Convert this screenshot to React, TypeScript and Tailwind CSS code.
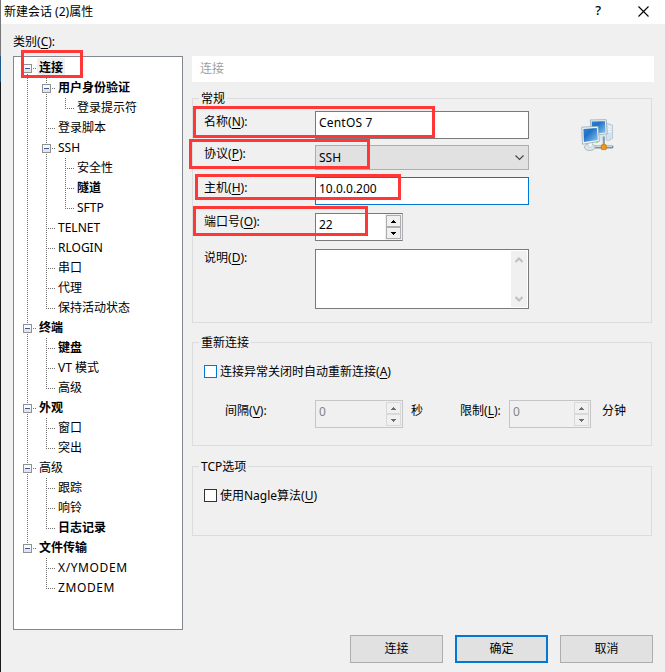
import React from 'react';

interface TreeNode {
  label: string;
  bold?: boolean;
  selected?: boolean;
  wide?: boolean;
  children?: TreeNode[];
}

const categories: TreeNode[] = [
  {
    label: '连接',
    bold: true,
    selected: true,
    children: [
      { label: '用户身份验证', bold: true, children: [{ label: '登录提示符' }] },
      { label: '登录脚本' },
      {
        label: 'SSH',
        children: [{ label: '安全性' }, { label: '隧道', bold: true }, { label: 'SFTP' }],
      },
      { label: 'TELNET' },
      { label: 'RLOGIN' },
      { label: '串口' },
      { label: '代理' },
      { label: '保持活动状态' },
    ],
  },
  {
    label: '终端',
    bold: true,
    children: [{ label: '键盘', bold: true }, { label: 'VT 模式' }, { label: '高级' }],
  },
  { label: '外观', bold: true, children: [{ label: '窗口' }, { label: '突出' }] },
  {
    label: '高级',
    children: [{ label: '跟踪' }, { label: '响铃' }, { label: '日志记录', bold: true }],
  },
  {
    label: '文件传输',
    bold: true,
    children: [{ label: 'X/YMODEM', wide: true }, { label: 'ZMODEM', wide: true }],
  },
];

interface GuideProps {
  up?: boolean;
  down?: boolean;
  branch?: boolean;
  expander?: boolean;
}

// One 19x20 cell of the tree: dotted connector lines and the [-] box
const Guide: React.FC<GuideProps> = ({ up, down, branch, expander }) => (
  <svg width="19" height="20" className="shrink-0" shapeRendering="crispEdges">
    <g stroke="#6f6f6f" strokeDasharray="1 1">
      {up && <line x1="9.5" y1="0" x2="9.5" y2="11" />}
      {down && <line x1="9.5" y1="10" x2="9.5" y2="20" />}
      {branch && <line x1="9" y1="10.5" x2="18" y2="10.5" />}
    </g>
    {expander && (
      <>
        <rect x="5" y="6" width="9" height="9" fill="#919191" />
        <rect x="6" y="7" width="7" height="7" fill="#fafafa" />
        <rect x="6" y="11" width="7" height="3" fill="#e6e6e6" />
        <rect x="7" y="10" width="5" height="1" fill="#3b5aa5" />
      </>
    )}
  </svg>
);

const TreeItem: React.FC<{ node: TreeNode; depth: number; first: boolean; last: boolean; trail: boolean[] }> = ({
  node,
  depth,
  first,
  last,
  trail,
}) => (
  <li>
    <div className="flex h-5 items-center">
      {trail.map((more, i) => (
        <Guide key={i} up={more} down={more} />
      ))}
      <Guide up={depth > 0 || !first} down={!last} branch expander={!!node.children} />
      <span
        className={`h-5 pl-0.5 pr-0.5 leading-[19px] ${node.bold ? 'font-bold' : ''} ${
          node.selected ? 'bg-[#f0f0f0]' : ''
        } ${node.wide ? 'tracking-[0.6px]' : ''}`}
      >
        {node.label}
      </span>
    </div>
    {node.children && (
      <ul>
        {node.children.map((child, i) => (
          <TreeItem
            key={child.label}
            node={child}
            depth={depth + 1}
            first={i === 0}
            last={i === node.children!.length - 1}
            trail={[...trail, !last]}
          />
        ))}
      </ul>
    )}
  </li>
);

const Label: React.FC<{ text: string; hotkey: string; className?: string; colon?: boolean }> = ({
  text,
  hotkey,
  className = '',
  colon = true,
}) => (
  <span className={`leading-4 whitespace-nowrap ${className}`}>
    {text}(<span className="underline underline-offset-2 [text-decoration-skip-ink:none]">{hotkey}</span>)
    {colon && ':'}
  </span>
);

const Group: React.FC<{ title: string; className: string; children: React.ReactNode }> = ({
  title,
  className,
  children,
}) => (
  <section className={`w-[460px] border border-[#dcdcdc] ${className}`}>
    <h2 className="-mt-2 -mb-px ml-1.5 h-4 w-fit bg-[#f0f0f0] px-0.5 leading-4">{title}</h2>
    {children}
  </section>
);

const Spinner: React.FC<{ value: string; width: string; disabled?: boolean }> = ({ value, width, disabled }) => (
  <div
    className={`flex h-7 border ${width} ${
      disabled ? 'border-[#c6c6c8] bg-[#f0f0f0] text-[#838383]' : 'border-[#7a7a7a] border-r-[#adadb3] bg-white'
    }`}
  >
    <span className="flex-1 pl-[3px] leading-[22px]">{value}</span>
    <div className="flex w-[17px] flex-col bg-[#f0f0f0] p-px">
      {['M2 4h5v-1h-1v-1h-1v-1h-1v1h-1v1h-1z', 'M2 1h5v1h-1v1h-1v1h-1v-1h-1v-1h-1z'].map((d) => (
        <span
          key={d}
          className={`flex h-3 w-[15px] items-center justify-center border ${
            disabled ? 'border-[#d9d9d9]' : 'border-[#adadad]'
          }`}
        >
          <svg width="9" height="5" shapeRendering="crispEdges">
            <path d={d} fill={disabled ? '#6d6d6d' : '#000'} />
          </svg>
        </span>
      ))}
    </div>
  </div>
);

const CheckBox: React.FC<{ text: string; hotkey: string; className: string; border: string }> = ({
  text,
  hotkey,
  className,
  border,
}) => (
  <div className={`flex items-start gap-[3px] pl-[11px] ${className}`}>
    <span className={`mt-px size-[13px] border bg-white ${border}`} />
    <Label text={text} hotkey={hotkey} colon={false} />
  </div>
);

const NetworkIcon = () => (
  <svg width="33" height="33" viewBox="0 0 34 34">
    <defs>
      <linearGradient id="screen" x1="0" y1="0" x2="1" y2="1">
        <stop offset="0" stopColor="#2f86d2" />
        <stop offset="0.35" stopColor="#2070c4" />
        <stop offset="1" stopColor="#8cc9f3" />
      </linearGradient>
    </defs>
    <path d="M26 4l4 1.5 2.5 1v13.5l-4.500 2.500-2-1z" fill="#d3e2ec" stroke="#a9bac6" strokeWidth="0.7" />
    <path d="M27.500 7.500l4 1M27.500 10l4 1M27.500 12.500l4 1" stroke="#f8fcff" />
    <path d="M9.500 1l16.500-.3 1 14.500-16 2z" fill="#eaf1f6" stroke="#93a5b1" strokeWidth="0.8" />
    <path d="M11 2.500l13.700-.2.500 11.700-13.700 1.500z" fill="url(#screen)" />
    <path d="M19 17l5-1 .5 4-4 3z" fill="#dce5ea" />
    <path d="M23.500 18v9" stroke="#829fae" strokeWidth="2.200" />
    <path d="M12 28.800h20" stroke="#768f9d" strokeWidth="3" strokeLinecap="round" />
    <path d="M12 28.300h20" stroke="#c7d7df" strokeWidth="1.200" />
    <ellipse cx="9" cy="29" rx="5.500" ry="3.500" fill="#dce5e9" stroke="#9aabb4" strokeWidth="0.8" />
    <path d="M7 24l5-.5-.5 5-3.500.8z" fill="#f3f7f9" stroke="#b1c0c8" strokeWidth="0.6" />
    <path d="M0.800 8.500l16.700-1 1.500 15.500-17.500 3z" fill="#eff5f8" stroke="#93a5b1" strokeWidth="0.8" />
    <path d="M2.500 10.200l13.800-.8 1 12.200-14.300 2.200z" fill="url(#screen)" />
    <rect x="21" y="26.500" width="5" height="5" rx="0.5" fill="#f49a0b" stroke="#cf7404" strokeWidth="0.8" />
    <circle cx="16.500" cy="24" r="0.8" fill="#7bd34b" />
  </svg>
);

// Red highlight frames drawn over the dialog
const highlights = [
  'left-[21px] top-[50px] h-7 w-[62px]',
  'left-[193px] top-[106px] h-8 w-[242px]',
  'left-[189px] top-[139px] h-[30px] w-[181px]',
  'left-[195px] top-[174px] h-[26px] w-[206px]',
  'left-[193px] top-[206px] h-[30px] w-[175px]',
];

const App: React.FC = () => {
  return (
    <div className="relative flex h-[672px] w-[665px] overflow-hidden bg-[#f0f0f0] font-['Noto_Sans','Noto_Sans_CJK_SC',sans-serif] text-[12px] text-black">
      <div className="flex w-px shrink-0 flex-col">
        <div className="h-14 bg-[#777]" />
        <div className="h-[26px] bg-[#1d5788]" />
        <div className="flex-1 bg-[#1a1a1e]" />
      </div>

      <div className="flex flex-1 flex-col">
        <header className="flex h-6 items-center bg-white pl-[3px]">
          <h1 className="flex-1 leading-[22px]">新建会话 (2)属性</h1>
          <span className="mr-[37px] pb-0.5 text-[13px] font-medium">?</span>
          <svg width="11" height="11" className="mr-4 mb-0.5">
            <path d="M0.500 0.500l10 10M10.500 0.500l-10 10" stroke="#000" strokeWidth="1.100" />
          </svg>
        </header>

        <main className="flex pl-3">
          <aside className="pt-2.5">
            <Label text="类别" hotkey="C" className="block" />
            <ul className="mt-1.5 h-[574px] w-[170px] border border-[#828790] bg-white pt-px pl-1">
              {categories.map((node, i) => (
                <TreeItem
                  key={node.label}
                  node={node}
                  depth={0}
                  first={i === 0}
                  last={i === categories.length - 1}
                  trail={[]}
                />
              ))}
            </ul>
          </aside>

          <div className="ml-[9px] pt-8">
            <div className="h-[26px] w-[462px] bg-white pl-2 leading-[25px] text-[#a0a0a0]">连接</div>

            <Group title="常规" className="mt-4 h-[225px]">
              <div className="mt-[5px] flex pl-[11px]">
                <div className="flex flex-col">
                  <div className="flex">
                    <Label text="名称" hotkey="N" className="w-[111px] pt-[3px]" />
                    <div className="h-7 w-[214px] border border-[#7a7a7a] bg-white pl-[3px] leading-[21px] tracking-[0.2px]">
                      CentOS 7
                    </div>
                  </div>
                  <div className="mt-1.5 flex">
                    <Label text="协议" hotkey="P" className="w-[111px] pt-px" />
                    <div className="flex h-[25px] w-[214px] items-center justify-between border border-[#adadad] bg-[#e1e1e1] pr-1 pl-[3px]">
                      <span>SSH</span>
                      <svg width="9" height="6">
                        <path d="M0.500 0.500l4 4 4-4" fill="none" stroke="#444" strokeWidth="1.100" />
                      </svg>
                    </div>
                  </div>
                  <div className="mt-[7px] flex">
                    <Label text="主机" hotkey="H" className="w-[111px] pt-[3px]" />
                    <div className="h-7 w-[214px] border border-[#0078d7] bg-white pl-[3px] leading-[21px]">
                      10.0.0.200
                    </div>
                  </div>
                  <div className="mt-2 flex">
                    <Label text="端口号" hotkey="O" className="w-[111px] pt-px" />
                    <Spinner value="22" width="w-[88px]" />
                  </div>
                  <div className="mt-2 flex">
                    <Label text="说明" hotkey="D" className="w-[111px] pt-px" />
                    <div className="flex h-[60px] w-[214px] justify-end border border-[#7a7a7a] bg-white p-px">
                      <div className="flex w-4 flex-col items-center justify-between bg-[#f0f0f0] pt-1.5 pb-[5px]">
                        <svg width="8" height="6" className="mr-px">
                          <path d="M0.500 5l3.500-3.500 3.500 3.500" fill="none" stroke="#bfbfbf" strokeWidth="2" />
                        </svg>
                        <svg width="8" height="6" className="mr-px">
                          <path d="M0.500 1l3.500 3.500 3.500-3.500" fill="none" stroke="#bfbfbf" strokeWidth="2" />
                        </svg>
                      </div>
                    </div>
                  </div>
                </div>
                <div className="pt-2 pl-[52px]">
                  <NetworkIcon />
                </div>
              </div>
            </Group>

            <Group title="重新连接" className="mt-[19px] h-[104px]">
              <CheckBox text="连接异常关闭时自动重新连接" hotkey="A" border="border-[#0078d7]" className="mt-3.5" />
              <div className="mt-5 flex pl-8">
                <Label text="间隔" hotkey="V" className="w-[90px] pt-[3px]" />
                <Spinner value="0" width="w-[88px]" disabled />
                <span className="w-[49px] pt-[3px] pl-2 leading-4">秒</span>
                <Label text="限制" hotkey="L" className="w-[57px] pt-[3px] pl-2" />
                <Spinner value="0" width="w-[82px]" disabled />
                <span className="pt-[3px] pl-[11px] leading-4">分钟</span>
              </div>
            </Group>

            <Group title="TCP选项" className="mt-5 h-[70px]">
              <CheckBox text="使用Nagle算法" hotkey="U" border="border-[#333]" className="mt-3.5" />
            </Group>

            <footer className="mt-[99px] flex gap-3 pl-[158px]">
              <button className="h-7 w-[93px] border border-[#adadad] bg-[#e1e1e1]">连接</button>
              <button className="h-7 w-[93px] border-2 border-[#0078d7] bg-[#e1e1e1]">确定</button>
              <button className="h-7 w-[93px] border border-[#adadad] bg-[#e1e1e1]">取消</button>
            </footer>
          </div>
        </main>
      </div>

      {highlights.map((box) => (
        <div key={box} className={`pointer-events-none absolute border-3 border-[#ff3737] ${box}`} />
      ))}
    </div>
  );
};

export default App;
